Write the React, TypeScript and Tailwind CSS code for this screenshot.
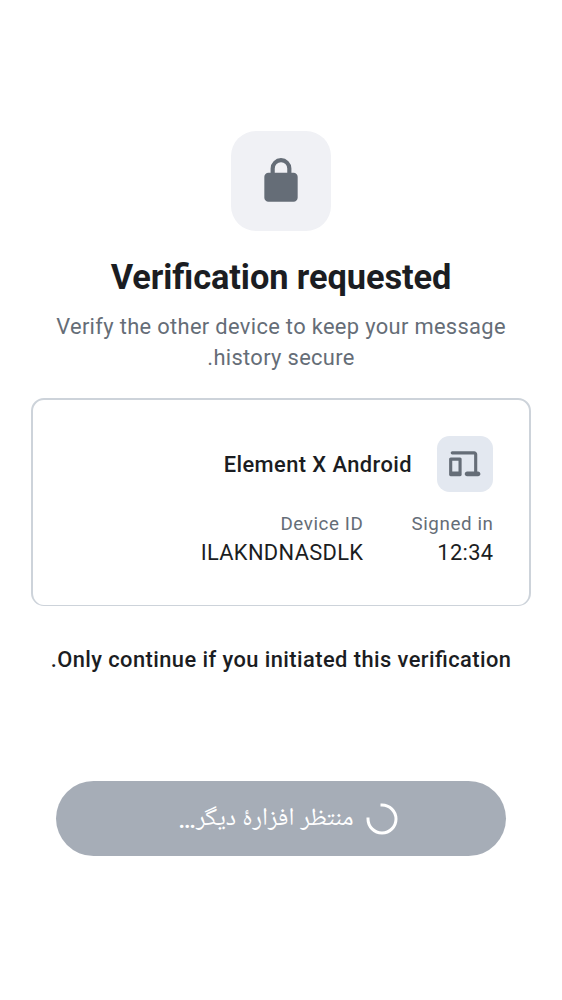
export default function App() {
  return (
    <main dir="rtl" className="flex h-[1000px] w-[562px] flex-col items-center bg-white pt-[131px] font-['Roboto','Noto_Naskh_Arabic_UI','Noto_Naskh_Arabic','DejaVu_Sans',sans-serif] text-[#1b1d22] antialiased [font-feature-settings:'liga'_1]">
      <div className="flex size-[100px] items-center justify-center rounded-[25px] bg-[#f0f1f5]">
        <svg viewBox="0 0 24 24" className="size-[50px] fill-[#656d77]">
          <path d="M6 22q-.824 0-1.412-.587A1.93 1.93 0 0 1 4 20V10q0-.825.588-1.412A1.93 1.93 0 0 1 6 8h1V6q0-2.075 1.463-3.537Q9.926 1 12 1q2.075 0 3.537 1.463Q17 3.925 17 6v2h1q.824 0 1.413.588Q20 9.175 20 10v10q0 .824-.587 1.413A1.93 1.93 0 0 1 18 22zM9 8h6V6q0-1.25-.875-2.125A2.9 2.9 0 0 0 12 3q-1.25 0-2.125.875A2.9 2.9 0 0 0 9 6z" />
        </svg>
      </div>
      <h1 className="mt-[25px] text-[34.375px] leading-[42px] font-bold tracking-[-0.08px] whitespace-nowrap">Verification requested</h1>
      <p className="mt-[13px] text-center text-[21.875px] leading-[31px] tracking-[0.34px] whitespace-nowrap text-[#656d77]">
        Verify the other device to keep your message<br />history secure.
      </p>
      <section className="mt-[25px] h-[208px] w-[500px] rounded-[13px] border-2 border-b border-[#cdd3da] px-[36px] pt-[36px]">
        <div className="flex items-center gap-[25px]">
          <div className="flex size-14 items-center justify-center rounded-[12.5px] bg-[#e3e8f0]">
            <svg viewBox="0 0 24 24" className="size-[37.5px] -scale-x-100 fill-[#656d77]">
              <path d="M3.5 20a1.45 1.45 0 0 1-1.062-.438A1.45 1.45 0 0 1 2 18.5q0-.624.438-1.062A1.45 1.45 0 0 1 3.5 17H4V6q0-.824.588-1.412A1.93 1.93 0 0 1 6 4h14q.424 0 .712.287Q21 4.576 21 5t-.288.713A.97.97 0 0 1 20 6H6v11h4.5q.624 0 1.063.438.437.437.437 1.062t-.437 1.063A1.45 1.45 0 0 1 10.5 20zM15 20a.97.97 0 0 1-.713-.288A.97.97 0 0 1 14 19V9q0-.424.287-.713A.97.97 0 0 1 15 8h6q.424 0 .712.287Q22 8.576 22 9v10q0 .424-.288.712A.97.97 0 0 1 21 20zm1-3h4v-7h-4z" />
            </svg>
          </div>
          <h2 className="text-[21.875px] leading-[31px] font-medium tracking-[0.43px]">Element X Android</h2>
        </div>
        <div className="mt-[20px] -mr-[0.5px] flex gap-[48px]">
          <div>
            <div className="text-[18.75px] leading-[25px] tracking-[0.6px] text-[#656d77]">Signed in</div>
            <div className="text-[21.875px] leading-[31px] tracking-[0.34px]">12:34</div>
          </div>
          <div>
            <div className="text-[18.75px] leading-[25px] tracking-[0.6px] text-[#656d77]">Device ID</div>
            <div className="text-[21.875px] leading-[31px] tracking-[0.34px]">ILAKNDNASDLK</div>
          </div>
        </div>
      </section>
      <p className="mt-[38px] text-[21.875px] leading-[31px] font-medium tracking-[0.43px] whitespace-nowrap">Only continue if you initiated this verification.</p>
      <button className="mt-[106px] flex h-[75px] w-[450px] items-center justify-center gap-[12px] rounded-full bg-[#a6adb7] pl-[14px] text-[24.85px] text-white">
        <svg viewBox="0 0 32 32" className="size-8 fill-none stroke-white stroke-[3]">
          <path strokeLinecap="square" d="M16 2a14 14 0 1 1-14 14" />
        </svg>
        <span className="pt-[2px] leading-[31px] whitespace-nowrap">منتظر افزارهٔ دیگر<span className="font-medium">…</span></span>
      </button>
    </main>
  );
}
